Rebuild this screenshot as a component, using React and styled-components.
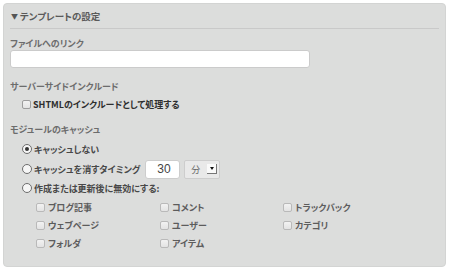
import React from "react";
import styled, { createGlobalStyle } from "styled-components";

const GlobalStyle = createGlobalStyle`
  html, body {
    margin: 0;
    padding: 0;
    background: #ffffff;
  }
  body {
    font-family: "Noto Sans CJK JP", "Liberation Sans", sans-serif;
    font-feature-settings: "palt";
  }
`;

const Panel = styled.div`
  box-sizing: border-box;
  margin: 3px 0 0 3px;
  width: 443px;
  height: 264px;
  padding: 0 6px;
  background: #dcdddc;
  border: 1px solid #d3d4d3;
  border-radius: 4px;
`;

const Header = styled.div`
  height: 24px;
  display: flex;
  align-items: center;
  padding-left: 1px;
  border-bottom: 1px solid #c9c9c9;
  font-size: 9.5px;
  font-weight: bold;
  color: #5a5a5a;
`;

const Caret = styled.span`
  font-size: 7px;
  margin-right: 2px;
  color: #555;
`;

const Label = styled.div`
  margin-top: ${({ $top }) => $top}px;
  height: 12px;
  line-height: 12px;
  font-size: 9px;
  font-weight: bold;
  color: #6c6c6c;
`;

const TextField = styled.div`
  box-sizing: border-box;
  width: 300px;
  height: 18px;
  background: #fff;
  border: 1px solid #cbcbcb;
  border-radius: 3px;
`;

const Row = styled.div`
  display: flex;
  align-items: center;
  margin-top: ${({ $top }) => $top}px;
  height: ${({ $h }) => $h || 14}px;
  padding-left: ${({ $indent }) => $indent ?? 12}px;
  font-size: 9px;
  font-weight: bold;
  color: ${({ $dark }) => ($dark ? "#2e2e2e" : "#484848")};
`;

const Box = styled.span`
  box-sizing: border-box;
  width: 9px;
  height: 9px;
  margin-right: ${({ $gap }) => $gap ?? 2}px;
  border: 1px solid ${({ $light }) => ($light ? "#b9b9b9" : "#9d9d9d")};
  border-radius: 2px;
  background: linear-gradient(#f2f2f2, #e3e3e3);
  flex: none;
`;

const Radio = styled.span`
  box-sizing: border-box;
  width: 10px;
  height: 10px;
  margin-right: 2px;
  border: 1px solid #6d6d6d;
  border-radius: 50%;
  background: #f6f6f6;
  display: flex;
  align-items: center;
  justify-content: center;
  flex: none;
  &::after {
    content: "";
    display: ${({ $on }) => ($on ? "block" : "none")};
    width: 4px;
    height: 4px;
    border-radius: 50%;
    background: #333;
  }
`;

const NumberField = styled.div`
  box-sizing: border-box;
  width: 35px;
  height: 19px;
  margin-left: 5px;
  padding-left: 11px;
  display: flex;
  align-items: center;
  background: #fff;
  border: 1px solid #cdcdcd;
  border-radius: 3px;
  font-family: "Liberation Sans", sans-serif;
  font-weight: normal;
  font-size: 12px;
  color: #444;
`;

const Select = styled.div`
  box-sizing: border-box;
  width: 36px;
  height: 19px;
  margin-left: 4px;
  padding: 0 1px 0 6px;
  display: flex;
  align-items: center;
  justify-content: space-between;
  background: #e9e9e9;
  border: 1px solid #cdcdcd;
  border-radius: 2px;
  font-weight: normal;
  font-size: 9px;
  color: #666;
`;

const SelectButton = styled.span`
  box-sizing: border-box;
  width: 10px;
  height: 10px;
  margin-right: 1px;
  display: flex;
  align-items: center;
  justify-content: center;
  background: #fafafa;
  border-right: 1px solid #777;
  border-bottom: 1px solid #777;
  &::after {
    content: "";
    border-left: 2.5px solid transparent;
    border-right: 2.5px solid transparent;
    border-top: 3px solid #111;
  }
`;

const Grid = styled.div`
  display: grid;
  grid-template-columns: 124px 123px 124px;
  grid-auto-rows: 14px;
  row-gap: 4px;
  margin-top: 5px;
  padding-left: 26px;
`;

const Item = styled.div`
  display: flex;
  align-items: center;
  font-size: 9px;
  font-weight: bold;
  color: #5c5c5c;
`;

const items = [
  "ブログ記事",
  "コメント",
  "トラックバック",
  "ウェブページ",
  "ユーザー",
  "カテゴリ",
  "フォルダ",
  "アイテム",
];

export default function App() {
  return (
    <>
      <GlobalStyle />
      <Panel>
        <Header>
          <Caret>▼</Caret>テンプレートの設定
        </Header>

        <Label $top={9}>ファイルへのリンク</Label>
        <TextField />

        <Label $top={13}>サーバーサイドインクルード</Label>
        <Row $top={4} $dark>
          <Box $gap={2} />
          SHTMLのインクルードとして処理する
        </Row>

        <Label $top={13}>モジュールのキャッシュ</Label>
        <Row $top={6}>
          <Radio $on />
          キャッシュしない
        </Row>
        <Row $top={3} $h={20}>
          <Radio />
          キャッシュを消すタイミング
          <NumberField>30</NumberField>
          <Select>
            分<SelectButton />
          </Select>
        </Row>
        <Row $top={2}>
          <Radio />
          作成または更新後に無効にする:
        </Row>

        <Grid>
          {items.map((name) => (
            <Item key={name}>
              <Box $light $gap={3} />
              {name}
            </Item>
          ))}
        </Grid>
      </Panel>
    </>
  );
}
